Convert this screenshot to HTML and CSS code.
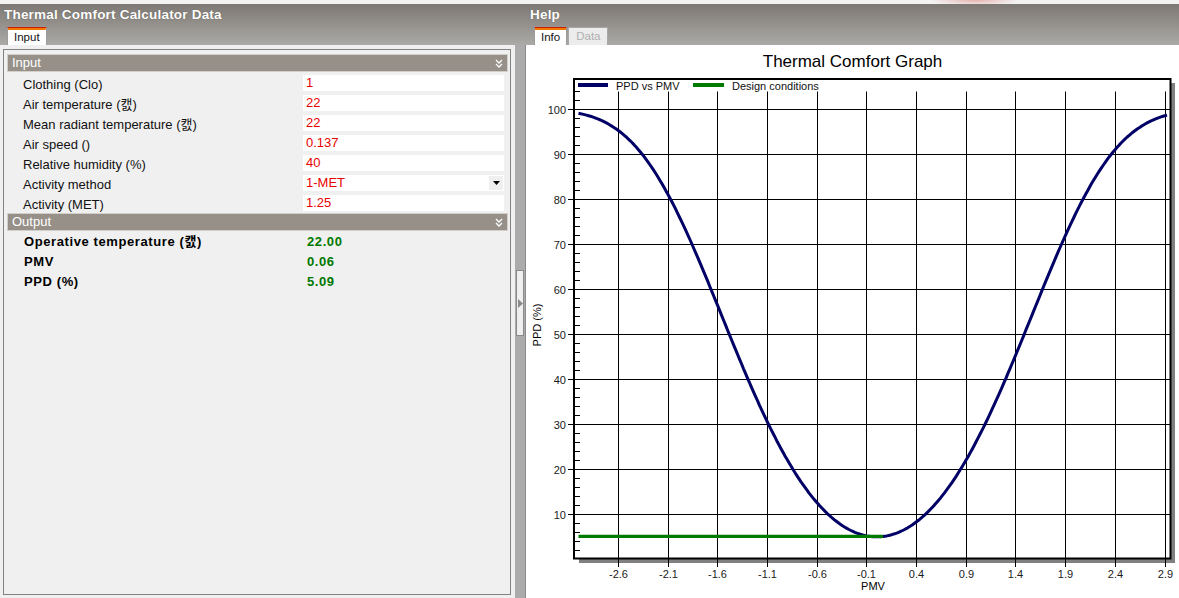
FILE: index.html
```html
<!DOCTYPE html>
<html>
<head>
<meta charset="utf-8">
<link rel="stylesheet" href="styles.css">
</head>
<body>
<div class="topstrip"></div>
<div class="header">
  <div class="hcol hcol-left">
    <div class="htitle">Thermal Comfort Calculator Data</div>
    <div class="tabs tabs-left"><div class="tab tab-active">Input</div></div>
  </div>
  <div class="hcol hcol-right">
    <div class="htitle">Help</div>
    <div class="tabs tabs-right"><div class="tab tab-active">Info</div><div class="tab tab-disabled">Data</div></div>
  </div>
</div>
<div class="main">
  <div class="leftcol">
    <div class="pane">
      <div class="bar"><span>Input</span><svg class="chev" width="8" height="9" viewBox="0 0 8 9"><path d="M1 1l3 3 3-3M1 5l3 3 3-3" fill="none" stroke="#fff" stroke-width="1.3"/></svg></div>
      <div class="rows">
        <div class="row"><div class="lbl">Clothing (Clo)</div><div class="val">1</div></div>
        <div class="row"><div class="lbl">Air temperature (캜)</div><div class="val">22</div></div>
        <div class="row"><div class="lbl">Mean radiant temperature (캜)</div><div class="val">22</div></div>
        <div class="row"><div class="lbl">Air speed ()</div><div class="val">0.137</div></div>
        <div class="row"><div class="lbl">Relative humidity (%)</div><div class="val">40</div></div>
        <div class="row"><div class="lbl">Activity method</div><div class="val val-select"><span>1-MET</span><span class="ddbtn"><svg width="7" height="4" viewBox="0 0 7 4"><path d="M0 0h7L3.5 4z" fill="#000"/></svg></span></div></div>
        <div class="row"><div class="lbl">Activity (MET)</div><div class="val">1.25</div></div>
      </div>
      <div class="bar"><span>Output</span><svg class="chev" width="8" height="9" viewBox="0 0 8 9"><path d="M1 1l3 3 3-3M1 5l3 3 3-3" fill="none" stroke="#fff" stroke-width="1.3"/></svg></div>
      <div class="orows">
        <div class="orow"><div class="olbl">Operative temperature (캜)</div><div class="oval">22.00</div></div>
        <div class="orow"><div class="olbl">PMV</div><div class="oval">0.06</div></div>
        <div class="orow"><div class="olbl">PPD (%)</div><div class="oval">5.09</div></div>
      </div>
    </div>
  </div>
  <div class="splitter"><div class="splitbtn"><svg width="5" height="9" viewBox="0 0 5 9"><path d="M0 0l5 4.5L0 9z" fill="#8a8a8a"/></svg></div></div>
  <div class="rightpane">
    <div class="gtitle">Thermal Comfort Graph</div>
    <svg class="chart" width="653" height="520" viewBox="0 0 653 520">
      <rect x="53" y="5" width="596" height="480" fill="#808080"/>
      <rect x="48" y="1" width="596.5" height="479.5" fill="#fff"/>
      <g stroke="#000" stroke-width="1" fill="none">
        <path d="M42 31.5H645M42 76.5H645M42 121.5H645M42 166.5H645M42 211.5H645M42 256.5H645M42 301.5H645M42 346.5H645M42 391.5H645M42 436.5H645"/>
        <path d="M92.5 13.5V489M142.5 13.5V489M191.5 13.5V489M241.5 13.5V489M291.5 13.5V489M340.5 13.5V489M390.5 13.5V489M440.5 13.5V489M489.5 13.5V489M539.5 13.5V489M589.5 13.5V489M639.5 13.5V489"/>
        <path d="M48 13.5h6M48 22.5h6M48 40.5h6M48 49.5h6M48 58.5h6M48 67.5h6M48 85.5h6M48 94.5h6M48 103.5h6M48 112.5h6M48 130.5h6M48 139.5h6M48 148.5h6M48 157.5h6M48 175.5h6M48 184.5h6M48 193.5h6M48 202.5h6M48 220.5h6M48 229.5h6M48 238.5h6M48 247.5h6M48 265.5h6M48 274.5h6M48 283.5h6M48 292.5h6M48 310.5h6M48 319.5h6M48 328.5h6M48 337.5h6M48 355.5h6M48 364.5h6M48 373.5h6M48 382.5h6M48 400.5h6M48 409.5h6M48 418.5h6M48 427.5h6M48 445.5h6M48 454.5h6M48 463.5h6M48 472.5h6"/>
      </g>
      <rect x="48" y="1" width="596.5" height="479.5" fill="none" stroke="#000" stroke-width="2"/>
      <polyline id="curve" fill="none" stroke="#000066" stroke-width="3" stroke-linejoin="round" points=""/>
      <line x1="52.5" y1="458.4" x2="357" y2="458.4" stroke="#007a00" stroke-width="3.2"/>
      <rect x="52" y="5" width="30" height="4" fill="#000066"/>
      <text class="lg" x="90" y="12">PPD vs PMV</text>
      <rect x="167" y="5" width="31" height="4" fill="#007a00"/>
      <text class="lg" x="206" y="12">Design conditions</text>
      <g class="ylab" text-anchor="end">
        <text x="40" y="35.5">100</text>
        <text x="40" y="80.5">90</text>
        <text x="40" y="125.5">80</text>
        <text x="40" y="170.5">70</text>
        <text x="40" y="215.5">60</text>
        <text x="40" y="260.5">50</text>
        <text x="40" y="305.5">40</text>
        <text x="40" y="350.5">30</text>
        <text x="40" y="395.5">20</text>
        <text x="40" y="440.5">10</text>
      </g>
      <g class="xlab" text-anchor="middle">
        <text x="92.5" y="500">-2.6</text>
        <text x="142.5" y="500">-2.1</text>
        <text x="191.5" y="500">-1.6</text>
        <text x="241.5" y="500">-1.1</text>
        <text x="291.5" y="500">-0.6</text>
        <text x="340.5" y="500">-0.1</text>
        <text x="390.5" y="500">0.4</text>
        <text x="440.5" y="500">0.9</text>
        <text x="489.5" y="500">1.4</text>
        <text x="539.5" y="500">1.9</text>
        <text x="589.5" y="500">2.4</text>
        <text x="639.5" y="500">2.9</text>
      </g>
      <text class="axt" text-anchor="middle" transform="translate(15 247) rotate(-90)">PPD (%)</text>
      <text class="axt" text-anchor="middle" x="347" y="512">PMV</text>
    </svg>
  </div>
</div>
<script src="script.js"></script>
</body>
</html>
```

FILE: styles.css
```css
* { box-sizing: border-box; }
html, body { margin: 0; padding: 0; }
body {
  width: 1179px;
  height: 598px;
  overflow: hidden;
  background: #f0f0f0;
  font-family: "Liberation Sans", Arial, "Noto Sans CJK KR", sans-serif;
}
.topstrip {
  height: 4px;
  background: radial-gradient(ellipse 45px 6px at 975px 0, #e6b4b0, rgba(240,240,240,0)), #f3f3f3;
}
.header {
  height: 41px;
  display: flex;
  background: linear-gradient(#7d7873, #abaaa7);
}
.hcol { display: flex; flex-direction: column; padding-left: 4px; }
.hcol-left { width: 526px; }
.hcol-right { flex: 1; }
.htitle {
  height: 23px;
  padding-top: 3px;
  line-height: 15px;
  font-weight: bold;
  font-size: 13.5px;
  letter-spacing: 0.2px;
  color: #fff;
  text-shadow: 0 0 1px rgba(70, 60, 50, 0.7);
}
.tabs { display: flex; gap: 1px; height: 18px; align-items: flex-end; }
.tabs-left { margin-left: 3px; }
.tabs-right { margin-left: 4px; }
.tab {
  height: 18px;
  padding: 0 6px;
  font-size: 11.5px;
  line-height: 17px;
  border: 1px solid #9c9c9c;
  border-bottom: none;
}
.tab-active {
  color: #111;
  background: linear-gradient(#f07800, #f07800) top / 100% 2px no-repeat, #fff;
  border-top: 1px solid #cc1e00;
  line-height: 19px;
}
.tab-disabled {
  color: #b0b0b0;
  background: #ececec;
  border-color: #a8a8a8;
  padding: 0 7px;
}
.main { display: flex; height: 553px; }
.leftcol {
  width: 515px;
  padding: 4px 4px 3px 3px;
  background: #f0f0f0;
}
.pane {
  height: 100%;
  border: 1px solid #828282;
  background: #f0f0f0;
  padding: 4px 2px 0 3px;
}
.bar {
  height: 18px;
  background: #969089;
  border: 1px solid #d2cfcb;
  color: #fff;
  font-size: 13px;
  line-height: 16px;
  padding-left: 4px;
  display: flex;
  align-items: center;
  justify-content: space-between;
  padding-right: 4px;
}
.chev { display: block; }
.rows { padding-top: 1px; }
.row { height: 20px; display: flex; align-items: center; }
.lbl {
  width: 296px;
  padding-left: 16px;
  font-size: 13px;
  line-height: 16px;
  padding-top: 4px;
  align-self: flex-start;
  color: #111;
  white-space: nowrap;
}
.val {
  width: 201px;
  height: 16px;
  background: #fff;
  color: #e80000;
  font-size: 13px;
  line-height: 16px;
  padding-left: 3px;
}
.val-select { display: flex; justify-content: space-between; }
.ddbtn {
  width: 14px;
  height: 14px;
  margin: 1px 1px 0 0;
  background: #efefef;
  display: flex;
  align-items: center;
  justify-content: center;
}
.ddbtn svg { display: block; }
.orows { padding-top: 0; }
.orow { height: 20px; display: flex; font-weight: bold; font-size: 13px; line-height: 22px; letter-spacing: 0.6px; }
.olbl { width: 300px; padding-left: 17px; color: #000; white-space: nowrap; }
.oval { color: #007800; }
.splitter {
  width: 10px;
  background: #ababab;
  padding: 225px 1px 0 1px;
}
.splitbtn {
  height: 66px;
  background: #efefef;
  border: 1px solid #8a8a8a;
  display: flex;
  align-items: center;
  justify-content: center;
}
.splitbtn svg { display: block; }
.rightpane {
  flex: 1;
  background: #fff;
  border-left: 1px solid #8a8a8a;
}
.gtitle {
  height: 33px;
  line-height: 33px;
  text-align: center;
  font-size: 17px;
  color: #000;
}
.chart { display: block; font-family: "Liberation Sans", Arial, sans-serif; }
.lg { font-size: 11px; fill: #111; }
.ylab, .xlab { font-size: 11px; fill: #1a1a1a; }
.axt { font-size: 11px; fill: #000; }
```

FILE: script.js
```js
(function () {
  var pts = [];
  for (var i = 0; i <= 296; i++) {
    var p = -3.0 + i * 0.02;
    var ppd = 100 - 95 * Math.exp(-0.03353 * Math.pow(p, 4) - 0.2179 * p * p);
    var X = 92.3 + (p + 2.6) * 99.4;
    var Y = 31.3 + (100 - ppd) * 4.5;
    pts.push(X.toFixed(1) + ',' + Y.toFixed(1));
  }
  document.getElementById('curve').setAttribute('points', pts.join(' '));
})();
```
